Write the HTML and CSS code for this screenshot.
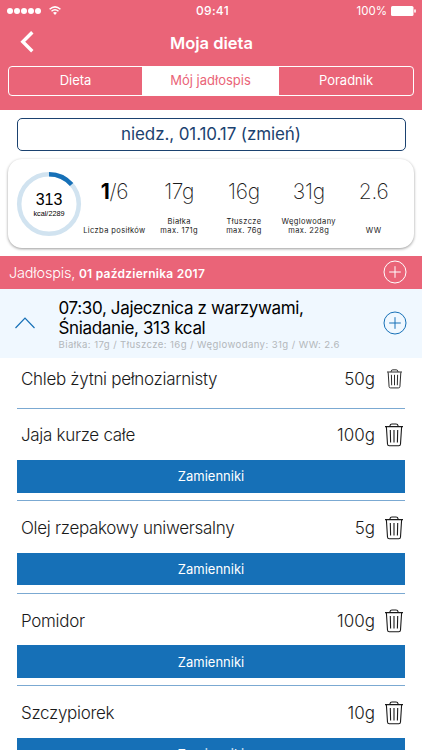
FILE: index.html
```html
<!DOCTYPE html>
<html lang="pl">

<head>
  <meta charset="UTF-8">
  <meta name="viewport" content="width=device-width, initial-scale=1.0">
  <title>Moja dieta</title>
  <link rel="stylesheet" href="styles.css">
</head>

<body>
  <!-- shared icons -->
  <svg class="sprite" width="0" height="0">
    <symbol id="plus" viewBox="0 0 24 24">
      <circle cx="12" cy="12" r="11" />
      <path d="M12 6.2v11.6M6.2 12h11.6" />
    </symbol>
    <symbol id="trash" viewBox="0 0 18 24">
      <path d="M0 3.6h18M5 3.4V2.6Q5.2 1 7 1h4q1.8 0 2 1.6v.8M1.4 4l1.1 17q.1 1.7 1.8 1.7h9.4q1.7 0 1.8-1.7L16.6 4M5.3 7l.3 12.5M9 7v12.5M12.7 7l-.3 12.5" />
    </symbol>
  </svg>

  <header class="header">
    <div class="status">
      <div class="signal">
        <i></i><i></i><i></i><i></i><i></i>
        <svg class="wifi" viewBox="0 0 12 9">
          <path d="M.6 3.2Q6-1.5 11.4 3.2M2.5 5.3Q6 2.2 9.5 5.3" />
          <path class="wifi-dot" d="M4 6.8Q6 5 8 6.8L6 8.9z" />
        </svg>
      </div>
      <span class="time">09:41</span>
      <div class="battery">
        <span>100%</span>
        <svg width="25" height="10" viewBox="0 0 25 10">
          <rect width="22.5" height="10" rx="1.5" />
          <rect x="23.2" y="3.2" width="1.6" height="3.6" rx=".8" />
        </svg>
      </div>
    </div>
    <div class="title-bar">
      <svg class="back" viewBox="0 0 14 22">
        <path d="M12.3 1.2L2.8 10.7l9.5 9.5" />
      </svg>
      <h1>Moja dieta</h1>
    </div>
    <nav class="tabs">
      <a class="tab">Dieta</a>
      <a class="tab active">Mój jadłospis</a>
      <a class="tab">Poradnik</a>
    </nav>
  </header>

  <main>
    <button class="date">niedz., 01.10.17 (zmień)</button>

    <section class="summary">
      <div class="ring">
        <svg viewBox="0 0 66 66">
          <circle class="track" cx="33" cy="33" r="29.8" />
          <circle class="progress" cx="33" cy="33" r="29.8" pathLength="2289" stroke-dasharray="313 2289" />
        </svg>
        <div class="ring-text">
          <strong>313</strong>
          <small>kcal/2289</small>
        </div>
      </div>
      <div class="stat">
        <span class="value"><b>1</b>/6</span>
        <span class="label">Liczba posiłków</span>
      </div>
      <div class="stat">
        <span class="value">17g</span>
        <span class="label">Białka<br>max. 171g</span>
      </div>
      <div class="stat">
        <span class="value">16g</span>
        <span class="label">Tłuszcze<br>max. 76g</span>
      </div>
      <div class="stat">
        <span class="value">31g</span>
        <span class="label">Węglowodany<br>max. 228g</span>
      </div>
      <div class="stat">
        <span class="value">2.6</span>
        <span class="label">WW</span>
      </div>
    </section>

    <div class="day">
      <p>Jadłospis, <b>01 października 2017</b></p>
      <svg class="plus"><use href="#plus" /></svg>
    </div>

    <div class="meal">
      <svg class="collapse" viewBox="0 0 20 12">
        <path d="M.5 11L10 1.2 19.5 11" />
      </svg>
      <div class="meal-text">
        <h2>07:30, Jajecznica z warzywami,<br>Śniadanie, 313 kcal</h2>
        <p>Białka: 17g / Tłuszcze: 16g / Węglowodany: 31g / WW: 2.6</p>
      </div>
      <svg class="plus blue"><use href="#plus" /></svg>
    </div>

    <ul class="products">
      <li class="product first">
        <div class="row">
          <span class="name">Chleb żytni pełnoziarnisty</span>
          <span class="amount">50g</span>
          <svg class="trash small"><use href="#trash" /></svg>
        </div>
      </li>
      <li class="product">
        <div class="row">
          <span class="name">Jaja kurze całe</span>
          <span class="amount">100g</span>
          <svg class="trash"><use href="#trash" /></svg>
        </div>
        <button class="replace">Zamienniki</button>
      </li>
      <li class="product">
        <div class="row">
          <span class="name">Olej rzepakowy uniwersalny</span>
          <span class="amount">5g</span>
          <svg class="trash"><use href="#trash" /></svg>
        </div>
        <button class="replace">Zamienniki</button>
      </li>
      <li class="product">
        <div class="row">
          <span class="name">Pomidor</span>
          <span class="amount">100g</span>
          <svg class="trash"><use href="#trash" /></svg>
        </div>
        <button class="replace">Zamienniki</button>
      </li>
      <li class="product">
        <div class="row">
          <span class="name">Szczypiorek</span>
          <span class="amount">10g</span>
          <svg class="trash"><use href="#trash" /></svg>
        </div>
        <button class="replace">Zamienniki</button>
      </li>
    </ul>
  </main>
</body>

</html>
```
FILE: styles.css
```css
* {
  box-sizing: border-box;
}

body {
  margin: 0;
  height: 750px;
  overflow: hidden;
  background: #fff;
  font-family: Inter, "Liberation Sans", sans-serif;
  color: #1a1a1a;
}

h1,
h2,
p,
ul {
  margin: 0;
  padding: 0;
}

svg {
  display: block;
  fill: none;
  flex: none;
}

button {
  display: block;
  font-family: inherit;
  padding: 0;
}

.sprite {
  position: absolute;
}

/* header */
.header {
  height: 110px;
  background: #ea6478;
  color: #fff;
}

.status {
  display: grid;
  grid-template-columns: 1fr auto 1fr;
  align-items: center;
  height: 21px;
  padding: 0 6px 0 7px;
  font-size: 12px;
}

.signal,
.battery {
  display: flex;
  align-items: center;
}

.signal i {
  width: 6px;
  height: 6px;
  margin-right: 1.1px;
  border-radius: 50%;
  background: #fff;
}

.wifi {
  width: 12px;
  height: 9px;
  margin-left: 7px;
  stroke: #fff;
  stroke-width: 1.5;
}

.wifi .wifi-dot {
  fill: #fff;
  stroke: none;
}

.time {
  padding-left: 2px;
  font-weight: 500;
  letter-spacing: 0.3px;
}

.battery {
  justify-content: flex-end;
  gap: 4px;
}

.battery span {
  font-size: 11.5px;
}

.battery svg {
  fill: #fff;
}

.title-bar {
  display: grid;
  grid-template-columns: 40px 1fr 40px;
  align-items: center;
  height: 44.5px;
}

.back {
  width: 14px;
  height: 22px;
  margin: 0 0 2px 20px;
  stroke: #fff;
  stroke-width: 3.4;
}

h1 {
  padding-left: 1px;
  font-size: 16.5px;
  font-weight: 600;
  text-align: center;
}

.tabs {
  display: grid;
  grid-template-columns: 133px 137px 1fr;
  height: 30px;
  margin: 0 8px;
  border: 1px solid #fff;
  border-radius: 4px;
  overflow: hidden;
}

.tab {
  display: flex;
  align-items: center;
  justify-content: center;
  padding-bottom: 1px;
  font-size: 13px;
}

.tab.active {
  background: #fff;
  color: #ea6478;
}

/* date and daily summary */
.date {
  width: 389px;
  height: 33px;
  margin: 8px 0 0 16.5px;
  padding-bottom: 1px;
  border: 1.5px solid #1b4270;
  border-radius: 5px;
  background: #fff;
  color: #1b4270;
  font-size: 17px;
  letter-spacing: -0.1px;
}

.summary {
  display: flex;
  height: 89px;
  margin: 7.5px 8px 0;
  padding-left: 8px;
  border-radius: 14px;
  box-shadow: 0 1px 3px rgba(0, 0, 0, 0.4);
}

.ring {
  display: grid;
  width: 66px;
  height: 66px;
  margin-top: 12px;
}

.ring > * {
  grid-area: 1 / 1;
}

.ring circle {
  stroke-width: 4.5;
}

.track {
  stroke: #d1e3f0;
}

.progress {
  stroke: #1670b7;
  transform: rotate(-90deg);
  transform-origin: center;
}

.ring-text {
  display: flex;
  flex-direction: column;
  align-items: center;
  padding-top: 20px;
  color: #000;
}

.ring-text strong {
  font: 400 16px/18px "Liberation Sans", sans-serif;
}

.ring-text small {
  font: 7.3px/9px "Liberation Sans", sans-serif;
}

.stat {
  display: flex;
  flex-direction: column;
  justify-content: space-between;
  align-items: center;
  width: 64.8px;
  padding: 21px 0 12px;
  text-align: center;
  white-space: nowrap;
}

.value {
  font-size: 21px;
  line-height: 24px;
  font-weight: 200;
  letter-spacing: -0.3px;
}

.value b {
  font-weight: 700;
  color: #000;
}

.label {
  font-size: 7.5px;
  line-height: 9.5px;
  letter-spacing: 0.4px;
}

/* day bar */
.day {
  display: flex;
  justify-content: space-between;
  align-items: center;
  height: 32.5px;
  margin-top: 8.5px;
  padding: 0 15px 0 9px;
  background: #ea6478;
  color: #fff;
  font-size: 14.5px;
  font-weight: 300;
  letter-spacing: -0.2px;
}

.day b {
  font-size: 12px;
  font-weight: 600;
  letter-spacing: 0.25px;
}

.plus {
  width: 24px;
  height: 24px;
  stroke: #fff;
  stroke-width: 1;
}

.plus.blue {
  stroke: #1670b7;
}

/* meal */
.meal {
  display: flex;
  height: 69.5px;
  padding: 9px 15px 0;
  background: #f0f8ff;
}

.collapse {
  width: 20px;
  height: 12px;
  margin-top: 19.5px;
  stroke: #1670b7;
  stroke-width: 1.2;
}

.meal-text {
  flex: 1;
  margin-left: 23.5px;
  white-space: nowrap;
}

h2 {
  font-size: 17px;
  line-height: 20.5px;
  font-weight: 400;
  letter-spacing: -0.35px;
  color: #000;
}

.meal-text p {
  font-size: 9.6px;
  line-height: 11px;
  letter-spacing: 0.4px;
  color: #b3b7bb;
}

.meal .plus {
  margin-top: 13.5px;
}

/* products */
.products {
  margin: 0 17px;
  list-style: none;
}

.product {
  height: 92.67px;
  border-bottom: 1px solid #7ba9d2;
}

.product.first {
  height: 50.5px;
}

.row {
  display: flex;
  align-items: center;
  height: 51.5px;
  padding: 2px 2px 0 4px;
  font-size: 17px;
  font-weight: 300;
}

.first .row {
  height: 42px;
  padding-right: 3px;
  padding-top: 0;
}

.name {
  flex: 1;
  letter-spacing: -0.31px;
}

.trash {
  width: 18px;
  height: 24px;
  margin-left: 10px;
  stroke: #1a1a1a;
  stroke-width: 1.1;
}

.trash.small {
  width: 15px;
  height: 20px;
  margin-left: 12px;
}

.replace {
  width: 100%;
  height: 32.5px;
  border: 0;
  background: #1670b7;
  color: #fff;
  font-size: 13px;
}
```
